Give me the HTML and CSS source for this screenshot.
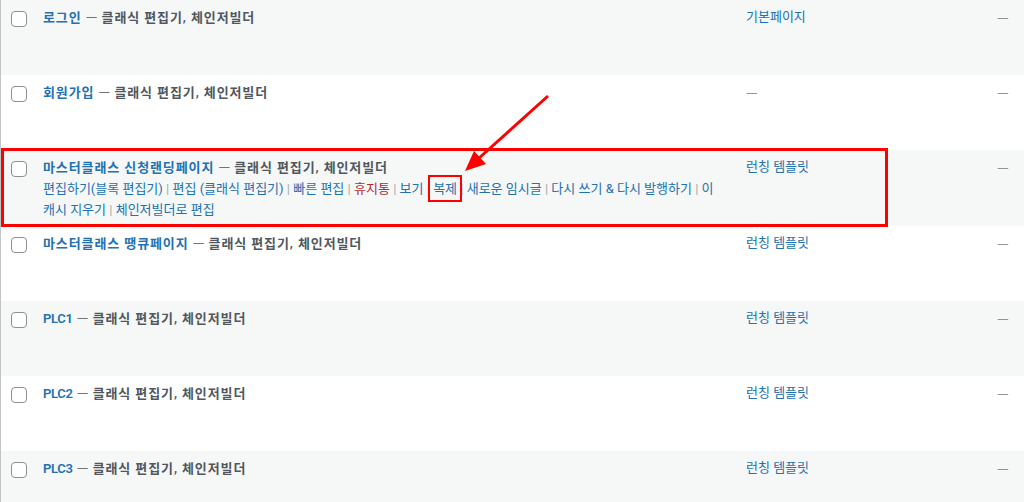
FILE: index.html
```html
<!DOCTYPE html>
<html lang="ko">

<head>
  <meta charset="UTF-8">
  <meta name="viewport" content="width=device-width, initial-scale=1.0">
  <title>페이지</title>
  <link rel="stylesheet" href="styles.css">
</head>

<body>
  <div id="pageList">

    <div class="row alt">
      <div class="cellCheck"><span class="checkBox"></span></div>
      <div class="cellTitle">
        <strong><a class="rowTitle">로그인</a> <span class="emDash">—</span> <span class="postState">클래식 편집기, 체인저빌더</span></strong>
      </div>
      <div class="cellTemplate"><a class="link">기본페이지</a></div>
      <div class="cellLast"><span class="dash">—</span></div>
    </div>

    <div class="row">
      <div class="cellCheck"><span class="checkBox"></span></div>
      <div class="cellTitle">
        <strong><a class="rowTitle">회원가입</a> <span class="emDash">—</span> <span class="postState">클래식 편집기, 체인저빌더</span></strong>
      </div>
      <div class="cellTemplate"><span class="dash">—</span></div>
      <div class="cellLast"><span class="dash">—</span></div>
    </div>

    <div class="row alt activeRow">
      <div class="cellCheck"><span class="checkBox"></span></div>
      <div class="cellTitle">
        <strong><a class="rowTitle">마스터클래스 신청랜딩페이지</a> <span class="emDash">—</span> <span class="postState">클래식 편집기, 체인저빌더</span></strong>
        <div class="rowActions">
          <a class="link">편집하기(블록 편집기)</a> <span class="sep">|</span>
          <a class="link">편집 (클래식 편집기)</a> <span class="sep">|</span>
          <a class="link">빠른 편집</a> <span class="sep">|</span>
          <a class="link trash">휴지통</a> <span class="sep">|</span>
          <a class="link">보기</a> <span class="sep">|</span>
          <a class="link copyLink">복제</a> <span class="sep">|</span>
          <a class="link">새로운 임시글</a> <span class="sep">|</span>
          <a class="link">다시 쓰기 &amp; 다시 발행하기</a> <span class="sep">|</span>
          <a class="link">이 캐시 지우기</a> <span class="sep">|</span>
          <a class="link">체인저빌더로 편집</a>
        </div>
      </div>
      <div class="cellTemplate"><a class="link">런칭 템플릿</a></div>
      <div class="cellLast"><span class="dash">—</span></div>
      <div class="markBox"></div>
    </div>

    <div class="row">
      <div class="cellCheck"><span class="checkBox"></span></div>
      <div class="cellTitle">
        <strong><a class="rowTitle">마스터클래스 땡큐페이지</a> <span class="emDash">—</span> <span class="postState">클래식 편집기, 체인저빌더</span></strong>
      </div>
      <div class="cellTemplate"><a class="link">런칭 템플릿</a></div>
      <div class="cellLast"><span class="dash">—</span></div>
    </div>

    <div class="row alt">
      <div class="cellCheck"><span class="checkBox"></span></div>
      <div class="cellTitle">
        <strong><a class="rowTitle latin">PLC1</a> <span class="emDash">—</span> <span class="postState">클래식 편집기, 체인저빌더</span></strong>
      </div>
      <div class="cellTemplate"><a class="link">런칭 템플릿</a></div>
      <div class="cellLast"><span class="dash">—</span></div>
    </div>

    <div class="row">
      <div class="cellCheck"><span class="checkBox"></span></div>
      <div class="cellTitle">
        <strong><a class="rowTitle latin">PLC2</a> <span class="emDash">—</span> <span class="postState">클래식 편집기, 체인저빌더</span></strong>
      </div>
      <div class="cellTemplate"><a class="link">런칭 템플릿</a></div>
      <div class="cellLast"><span class="dash">—</span></div>
    </div>

    <div class="row alt">
      <div class="cellCheck"><span class="checkBox"></span></div>
      <div class="cellTitle">
        <strong><a class="rowTitle latin">PLC3</a> <span class="emDash">—</span> <span class="postState">클래식 편집기, 체인저빌더</span></strong>
      </div>
      <div class="cellTemplate"><a class="link">런칭 템플릿</a></div>
      <div class="cellLast"><span class="dash">—</span></div>
    </div>

    <!-- annotation arrow pointing at 복제 -->
    <svg class="arrow" width="1024" height="502" viewBox="0 0 1024 502">
      <line x1="548" y1="96" x2="478" y2="159" stroke="#f00" stroke-width="3" />
      <polygon points="465,171 474,151 486,164" fill="#f00" />
    </svg>
  </div>
</body>

</html>
```

FILE: styles.css
```css
:root {
  --linkColor: #2271b1;
  --textColor: #50575e;
  --altRow: #f6f7f7;
  --markColor: #f00;
}

body {
  margin: 0;
  background: #fff;
  font-family: Roboto, "Noto Sans CJK KR", sans-serif;
  font-size: 13px;
  color: #3c434a;
  overflow: hidden;
}

#pageList {
  position: relative;
  border-left: 1px solid #c3c4c7;
  height: 502px;
}

.row {
  display: grid;
  grid-template-columns: 32px 703px 252px 1fr;
  height: 75px;
  position: relative;
}

.alt {
  background: var(--altRow);
}

.activeRow {
  height: 76px;
}

.cellCheck {
  padding: 11px 0 0 10px;
}

.checkBox {
  display: block;
  width: 14px;
  height: 14px;
  border: 1px solid #8c8f94;
  border-radius: 4px;
  background: #fff;
}

.cellTitle,
.cellTemplate,
.cellLast {
  padding: 7px 10px 0 10px;
  line-height: 19.5px;
}

.cellLast {
  padding-left: 9px;
}

.rowTitle {
  color: var(--linkColor);
  font-weight: 600;
}

.latin {
  letter-spacing: -0.3px;
}

strong {
  font-weight: 600;
  color: var(--textColor);
  letter-spacing: 0.9px;
}

.emDash,
.dash {
  font-family: "Noto Sans CJK KR", sans-serif;
  font-weight: 400;
}

.emDash {
  letter-spacing: 0;
}

.postState {
  color: var(--textColor);
}

.link {
  color: var(--linkColor);
}

.dash {
  color: #787c82;
}

.rowActions {
  line-height: 21px;
  padding-right: 4px;
}

.sep {
  color: #a7aaad;
}

.trash {
  color: #b32d2e;
}

.copyLink {
  position: relative;
}

.copyLink::after {
  content: "";
  position: absolute;
  left: -5px;
  right: -5px;
  top: -6px;
  bottom: -6px;
  border: 2px solid var(--markColor);
}

.markBox {
  position: absolute;
  left: 0;
  top: -2px;
  width: 881px;
  height: 73px;
  border: 3px solid var(--markColor);
  pointer-events: none;
}

.arrow {
  position: absolute;
  left: -1px;
  top: 0;
}
```
